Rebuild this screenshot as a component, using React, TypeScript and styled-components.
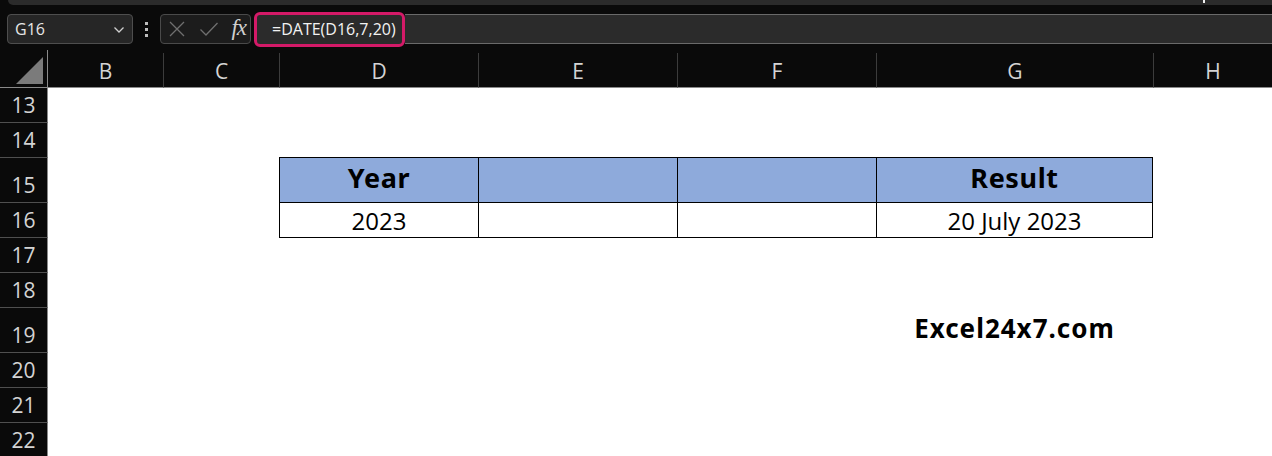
import React from "react";
import styled, { createGlobalStyle } from "styled-components";

const GlobalStyle = createGlobalStyle`
    html, body {
        margin: 0;
        padding: 0;
        background: #0a0a0a;
        overflow: hidden;
    }
`;

interface ColumnDef {
    name: string;
    width: string;
}

interface RowDef {
    n: number;
    h: number;
}

const columns: ColumnDef[] = [
    { name: "B", width: "115px" },
    { name: "C", width: "116px" },
    { name: "D", width: "199px" },
    { name: "E", width: "199px" },
    { name: "F", width: "199px" },
    { name: "G", width: "277px" },
    { name: "H", width: "1fr" },
];

const rows: RowDef[] = [
    { n: 13, h: 35 },
    { n: 14, h: 35 },
    { n: 15, h: 45 },
    { n: 16, h: 35 },
    { n: 17, h: 35 },
    { n: 18, h: 35 },
    { n: 19, h: 45 },
    { n: 20, h: 35 },
    { n: 21, h: 35 },
    { n: 22, h: 35 },
];

// table cells keyed by "row:col"
const tableCells: Record<string, { text?: string; head?: boolean }> = {
    "15:D": { text: "Year", head: true },
    "15:E": { head: true },
    "15:F": { head: true },
    "15:G": { text: "Result", head: true },
    "16:D": { text: "2023" },
    "16:E": {},
    "16:F": {},
    "16:G": { text: "20 July 2023" },
};

const lastTableCol = "G";

export default function App() {
    return (
        <Screen>
            <GlobalStyle />
            <TopStrip>
                <SearchMark />
            </TopStrip>

            <FormulaRow>
                <NameBox>
                    <span>G16</span>
                    <svg width="12" height="8" viewBox="0 0 12 8">
                        <path d="M1.5 1.5 L6 6 L10.5 1.5" fill="none" stroke="#cfcfcf" strokeWidth="1.3" />
                    </svg>
                </NameBox>
                <Dots>
                    <i />
                    <i />
                    <i />
                </Dots>
                <EditButtons>
                    <svg width="18" height="18" viewBox="0 0 18 18">
                        <path d="M2 2 L16 16 M16 2 L2 16" stroke="#6f6f6f" strokeWidth="1.3" />
                    </svg>
                    <svg width="20" height="16" viewBox="0 0 20 16">
                        <path d="M1.5 8.5 L7 14 L18.5 2" fill="none" stroke="#6f6f6f" strokeWidth="1.3" />
                    </svg>
                    <Fx>fx</Fx>
                </EditButtons>
                <FormulaInput>
                    <Formula>=DATE(D16,7,20)</Formula>
                    <FormulaRest />
                </FormulaInput>
            </FormulaRow>

            <Sheet>
                <Corner>
                    <svg width="28" height="27" viewBox="0 0 28 27">
                        <polygon points="27,0 27,27 0,27" fill="#7b7b7b" />
                    </svg>
                </Corner>
                {columns.map((c, i) => (
                    <ColHead key={c.name} $first={i === 0}>
                        {c.name}
                    </ColHead>
                ))}

                {rows.map((r) => (
                    <React.Fragment key={r.n}>
                        <RowHead>{r.n}</RowHead>
                        {columns.map((c) => {
                            const t = tableCells[`${r.n}:${c.name}`];
                            if (t) {
                                return (
                                    <TableCell
                                        key={c.name}
                                        $head={!!t.head}
                                        $top={r.n === 15}
                                        $right={c.name === lastTableCol}
                                    >
                                        {t.text}
                                    </TableCell>
                                );
                            }
                            if (r.n === 19 && c.name === "G") {
                                return (
                                    <Cell key={c.name}>
                                        <Watermark>Excel24x7.com</Watermark>
                                    </Cell>
                                );
                            }
                            return <Cell key={c.name} />;
                        })}
                    </React.Fragment>
                ))}
            </Sheet>
        </Screen>
    );
}

const Screen = styled.div`
    width: 1272px;
    height: 456px;
    background: #0a0a0a;
    overflow: hidden;
    font-family: "Open Sans", "Noto Sans", sans-serif;
`;

const TopStrip = styled.div`
    height: 5px;
    margin-left: 8px;
    background: #2b2b2b;
    border-bottom-left-radius: 5px;
    position: relative;
`;

const SearchMark = styled.div`
    position: absolute;
    left: 1195px;
    top: 0;
    width: 2px;
    height: 3px;
    background: #f0f0f0;
`;

const FormulaRow = styled.div`
    height: 42px;
    margin-top: 3px;
    display: flex;
    align-items: center;
    padding-left: 7px;
    box-sizing: border-box;
`;

const NameBox = styled.div`
    width: 126px;
    height: 30px;
    box-sizing: border-box;
    display: flex;
    align-items: center;
    justify-content: space-between;
    padding: 0 7px 0 7px;
    background: #262626;
    border: 1px solid #4e4e4e;
    border-radius: 4px;
    color: #e6e6e6;
    font-size: 16px;

    svg {
        margin-top: 2px;
    }
`;

const Dots = styled.div`
    width: 27px;
    display: flex;
    flex-direction: column;
    align-items: center;
    gap: 3px;

    i {
        width: 3px;
        height: 3px;
        background: #bdbdbd;
    }
`;

const EditButtons = styled.div`
    width: 91px;
    height: 30px;
    box-sizing: border-box;
    display: flex;
    align-items: center;
    justify-content: space-between;
    padding: 0 4px 0 7px;
    background: #1c1c1c;
    border: 1px solid #4a4a4a;
    border-radius: 4px;
`;

const Fx = styled.span`
    font-family: "Liberation Serif", "DejaVu Serif", serif;
    font-style: italic;
    font-size: 23px;
    color: #cfcfcf;
    letter-spacing: -1px;
    line-height: 1;
    padding-bottom: 3px;
`;

const FormulaInput = styled.div`
    flex: 1;
    display: flex;
    align-items: center;
    margin-left: 3px;
`;

const Formula = styled.div`
    height: 35px;
    width: 151px;
    box-sizing: border-box;
    display: flex;
    align-items: center;
    padding-left: 15px;
    background: #2b2b2b;
    border: 3px solid #d41a68;
    border-radius: 6px;
    color: #f2f2f2;
    font-size: 16px;
    white-space: nowrap;
`;

const FormulaRest = styled.div`
    flex: 1;
    height: 30px;
    box-sizing: border-box;
    background: #2b2b2b;
    border-top: 1px solid #6a6a6a;
    border-bottom: 1px solid #6a6a6a;
`;

const Sheet = styled.div`
    display: grid;
    grid-template-columns: 48px ${columns.map((c) => c.width).join(" ")};
    grid-template-rows: 38px ${rows.map((r) => `${r.h}px`).join(" ")};
`;

const Corner = styled.div`
    display: flex;
    align-items: flex-end;
    justify-content: flex-end;
    padding: 0 3px 3px 0;
    background: #0a0a0a;
    border-right: 1px solid #8a8a8a;
    border-bottom: 1px solid #8a8a8a;
`;

const ColHead = styled.div<{ $first: boolean }>`
    margin-top: 3px;
    display: flex;
    align-items: center;
    justify-content: center;
    border-left: ${(p) => (p.$first ? "none" : "1px solid #3c3c3c")};
    border-bottom: 1px solid #8a8a8a;
    color: #d4d4d4;
    font-size: 21px;
    padding-top: 1px;
`;

const RowHead = styled.div`
    display: flex;
    align-items: flex-end;
    justify-content: center;
    box-sizing: border-box;
    padding-bottom: 4px;
    background: #0a0a0a;
    border-right: 1px solid #8a8a8a;
    border-bottom: 1px solid #4f4f4f;
    color: #d4d4d4;
    font-size: 21px;
    line-height: 1.2;
`;

const Cell = styled.div`
    background: #ffffff;
    display: flex;
    align-items: center;
    justify-content: center;
`;

const TableCell = styled.div<{ $head: boolean; $top: boolean; $right: boolean }>`
    display: flex;
    align-items: center;
    justify-content: center;
    background: ${(p) => (p.$head ? "#8eaadb" : "#ffffff")};
    border-left: 1px solid #000;
    border-bottom: 1px solid #000;
    border-top: ${(p) => (p.$top ? "1px solid #000" : "none")};
    border-right: ${(p) => (p.$right ? "1px solid #000" : "none")};
    margin-top: ${(p) => (p.$top ? "-1px" : "0")};
    color: #000;
    font-family: ${(p) => (p.$head ? `"Noto Sans", "Open Sans", sans-serif` : `"Open Sans", sans-serif`)};
    font-weight: ${(p) => (p.$head ? 700 : 400)};
    font-size: ${(p) => (p.$head ? "27px" : "24px")};
    letter-spacing: ${(p) => (p.$head ? "0.6px" : "0")};
    padding-bottom: ${(p) => (p.$head ? "5px" : "0")};
    padding-top: ${(p) => (p.$head ? "0" : "1px")};
`;

const Watermark = styled.span`
    font-family: "Noto Sans", "Open Sans", sans-serif;
    font-weight: 700;
    font-size: 26px;
    color: #000;
    letter-spacing: 1px;
    padding-bottom: 6px;
`;
